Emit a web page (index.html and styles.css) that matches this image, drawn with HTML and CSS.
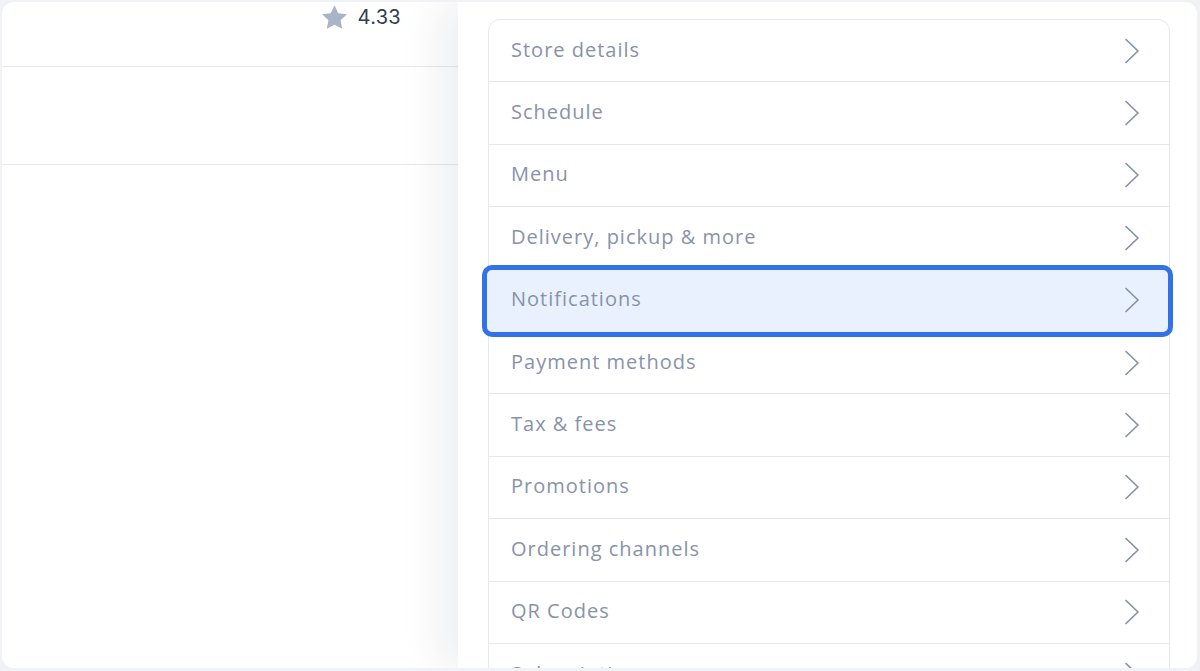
FILE: index.html
```html
<!DOCTYPE html>
<html>
<head>
<meta charset="utf-8">
<link rel="stylesheet" href="styles.css">
</head>
<body>
<div class="frame">
  <div class="main">
    <div class="rating-row">
      <svg class="star" viewBox="0 0 24 24"><path d="M12 1.8l3.1 6.6 7.2.9-5.3 5 1.4 7.1L12 17.9l-6.4 3.5 1.4-7.1-5.3-5 7.2-.9z"/></svg>
      <span class="rating">4.33</span>
    </div>
    <div class="blank-row"></div>
  </div>
  <div class="drawer">
    <div class="card">
      <div class="row"><span class="label">Store details</span><svg class="chev" viewBox="0 0 16 26"><polyline points="2,1.5 14,13 2,24.5"/></svg></div>
      <div class="row"><span class="label">Schedule</span><svg class="chev" viewBox="0 0 16 26"><polyline points="2,1.5 14,13 2,24.5"/></svg></div>
      <div class="row"><span class="label">Menu</span><svg class="chev" viewBox="0 0 16 26"><polyline points="2,1.5 14,13 2,24.5"/></svg></div>
      <div class="row"><span class="label">Delivery, pickup &amp; more</span><svg class="chev" viewBox="0 0 16 26"><polyline points="2,1.5 14,13 2,24.5"/></svg></div>
      <div class="row active"><span class="label">Notifications</span><svg class="chev" viewBox="0 0 16 26"><polyline points="2,1.5 14,13 2,24.5"/></svg></div>
      <div class="row"><span class="label">Payment methods</span><svg class="chev" viewBox="0 0 16 26"><polyline points="2,1.5 14,13 2,24.5"/></svg></div>
      <div class="row"><span class="label">Tax &amp; fees</span><svg class="chev" viewBox="0 0 16 26"><polyline points="2,1.5 14,13 2,24.5"/></svg></div>
      <div class="row"><span class="label">Promotions</span><svg class="chev" viewBox="0 0 16 26"><polyline points="2,1.5 14,13 2,24.5"/></svg></div>
      <div class="row"><span class="label">Ordering channels</span><svg class="chev" viewBox="0 0 16 26"><polyline points="2,1.5 14,13 2,24.5"/></svg></div>
      <div class="row"><span class="label">QR Codes</span><svg class="chev" viewBox="0 0 16 26"><polyline points="2,1.5 14,13 2,24.5"/></svg></div>
      <div class="row"><span class="label">Subscriptions</span><svg class="chev" viewBox="0 0 16 26"><polyline points="2,1.5 14,13 2,24.5"/></svg></div>
    </div>
  </div>
</div>
</body>
</html>
```
FILE: styles.css
```css
html, body {
  margin: 0;
  padding: 0;
  background: #f1f2f6;
  width: 1200px;
  height: 671px;
  overflow: hidden;
  font-family: "Open Sans", "Noto Sans", sans-serif;
}
.frame {
  margin: 2px 3px 0 2px;
  height: 666px;
  background: #ffffff;
  border-radius: 12px;
  overflow: hidden;
  display: flex;
}
.main {
  width: 456px;
  flex: none;
}
.rating-row {
  height: 65px;
  border-bottom: 1px solid #e6e8ec;
  display: flex;
  align-items: flex-start;
  justify-content: flex-end;
  padding-right: 57px;
  padding-top: 2px;
  box-sizing: border-box;
}
.star {
  width: 29px;
  height: 29px;
  fill: #a9b4c8;
  margin-right: 9px;
  margin-top: -1px;
}
.rating {
  font-family: "Inter", sans-serif;
  font-size: 20px;
  letter-spacing: 0.3px;
  color: #343d4e;
  line-height: 27px;
}
.blank-row {
  height: 97px;
  border-bottom: 1px solid #e6e8ec;
}
.drawer {
  flex: 1;
  background: #fff;
  position: relative;
  z-index: 1;
  box-shadow: -18px 0 40px rgba(20, 30, 50, 0.07);
  padding: 17px 27px 0 30px;
}
.card {
  border: 1px solid #e6e8ec;
  border-radius: 12px;
}
.row {
  position: relative;
  height: 61.4px;
  border-bottom: 1px solid #e6e8ec;
  display: flex;
  align-items: center;
  justify-content: space-between;
  padding: 0 29px 0 22px;
}
.label {
  position: relative;
  z-index: 1;
  font-size: 20px;
  line-height: 24px;
  margin-top: -2px;
  color: #8893a9;
  letter-spacing: 1px;
}
.chev {
  position: relative;
  z-index: 1;
  width: 16px;
  height: 26px;
  fill: none;
  stroke: #8592a8;
  stroke-width: 1.7;
  stroke-linecap: round;
  stroke-linejoin: round;
}
.active::after {
  content: "";
  position: absolute;
  top: -5px;
  left: -7px;
  right: -4px;
  bottom: -6px;
  border: 5px solid #3371e6;
  border-radius: 10px;
  background: #e9f1fe;
  z-index: 0;
}
```
